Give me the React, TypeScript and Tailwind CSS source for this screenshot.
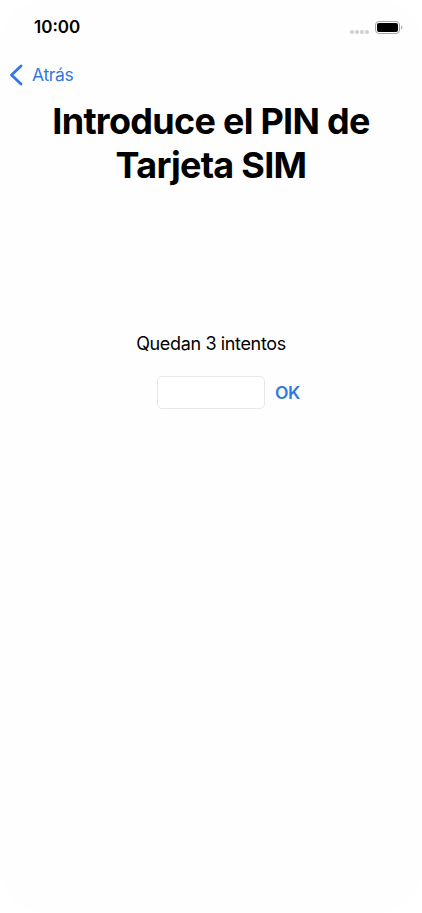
import React from 'react';

const StatusBar: React.FC = () => (
  <div className="flex h-[54px] items-center justify-between pl-[34px] pr-[19px]">
    <span className="text-[17px] font-semibold leading-none text-black">10:00</span>
    <div className="flex items-center gap-[6px]">
      <div className="flex gap-px pt-[9px]">
        <span className="h-1 w-1 rounded-full bg-[#cfcfcf]" />
        <span className="h-1 w-1 rounded-full bg-[#cfcfcf]" />
        <span className="h-1 w-1 rounded-full bg-[#cfcfcf]" />
        <span className="h-1 w-1 rounded-full bg-[#cfcfcf]" />
      </div>
      <svg width="28" height="13" viewBox="0 0 28 13" fill="none">
        <rect x="0.5" y="0.5" width="24" height="12" rx="3.5" stroke="#a6a6a6" />
        <rect x="2" y="2" width="21" height="9" rx="2" fill="#000" />
        <path d="M26 4.5v4c.8-.3 1.3-1.1 1.3-2s-.5-1.7-1.3-2z" fill="#a6a6a6" />
      </svg>
    </div>
  </div>
);

export default function App() {
  return (
    <div className="h-[913px] w-full overflow-hidden bg-white font-['Inter',sans-serif]">
      <div className="h-full rounded-[44px] bg-[#fefefe]">
        <StatusBar />

        <button className="flex h-[42px] items-center gap-[9px] pl-[9px] text-[#3478e5]">
          <svg width="14" height="22" viewBox="0 0 14 22" fill="none">
            <path d="M12 2L2.5 11L12 20" stroke="currentColor" strokeWidth="2.8" strokeLinecap="round" strokeLinejoin="round" />
          </svg>
          <span className="text-[17.5px] leading-none tracking-[-0.02em]">Atrás</span>
        </button>

        <h1 className="mt-[3px] text-center text-[36px] font-bold leading-[44px] tracking-[-0.02em] text-black">
          Introduce el PIN de
          <br />
          Tarjeta SIM
        </h1>

        <p className="mt-[145px] text-center text-[18px] leading-6 tracking-[-0.02em] text-black">
          Quedan 3 intentos
        </p>

        <div className="mt-5 flex items-center gap-[10px] pl-[157px]">
          <input className="h-[33px] w-[108px] rounded-[5px] border border-[#e8e8e8] bg-white outline-none" />
          <button className="text-[17.5px] font-semibold leading-none tracking-[-0.02em] text-[#3478e5]">OK</button>
        </div>
      </div>
    </div>
  );
}
